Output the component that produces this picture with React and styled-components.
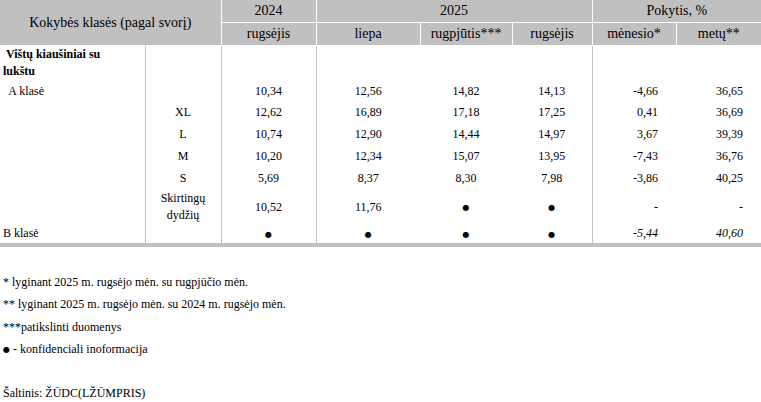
import React from "react";
import styled, { createGlobalStyle } from "styled-components";

const serif = `"Liberation Serif", "Times New Roman", serif`;

const GlobalStyle = createGlobalStyle`
  body {
    margin: 0;
    background: #fff;
    font-family: ${serif};
    color: #000;
  }
`;

const Page = styled.div`
  width: 761px;
  font-family: ${serif};
`;

const Table = styled.table`
  width: 761px;
  table-layout: fixed;
  border-collapse: collapse;
  font-family: ${serif};
  font-size: 12px;
`;

const HeadCell = styled.th`
  background: #c0c0c0;
  font-family: ${serif};
  font-weight: normal;
  font-size: 14px;
  height: 22px;
  padding: 0;
  text-align: center;
  vertical-align: middle;
  border: 1px solid #fff;
  border-top: none;
  &:first-child {
    border-left: none;
  }
  &:last-child {
    border-right: none;
  }
`;

const Row = styled.tr`
  height: ${p => p.$h}px;
  &:last-child td {
    border-bottom: 4px solid #c0c0c0;
  }
`;

const Cell = styled.td`
  padding: 0 ${p => (p.$align === "right" ? "18px" : p.$bold ? "10px" : "0")} 0 ${p => p.$indent || 0}px;
  text-align: ${p => p.$align || "center"};
  vertical-align: ${p => p.$valign || "middle"};
  border-left: ${p => (p.$line ? "1px solid #c0c0c0" : "none")};
  font-family: ${serif};
  font-size: 12px;
  font-style: ${p => (p.$italic ? "italic" : "normal")};
  font-weight: ${p => (p.$bold ? "bold" : "normal")};
  line-height: 17px;
`;

const Dot = styled.span`
  font-family: "DejaVu Sans", sans-serif;
  font-size: 8px;
  vertical-align: middle;
`;

const Notes = styled.div`
  padding: 24px 0 0 3px;
  font-family: ${serif};
  font-size: 12px;
  line-height: 22.5px;
`;

const Source = styled.p`
  margin: 20px 0 0;
`;

const D = () => <Dot>●</Dot>;

const sizes = [
  ["XL", "12,62", "16,89", "17,18", "17,25", "0,41", "36,69"],
  ["L", "10,74", "12,90", "14,44", "14,97", "3,67", "39,39"],
  ["M", "10,20", "12,34", "15,07", "13,95", "-7,43", "36,76"],
  ["S", "5,69", "8,37", "8,30", "7,98", "-3,86", "40,25"],
];

const DataCells = ({ cols, italic }) => (
  <>
    <Cell $line>{cols[0]}</Cell>
    <Cell $line>{cols[1]}</Cell>
    <Cell $line>{cols[2]}</Cell>
    <Cell>{cols[3]}</Cell>
    <Cell>{cols[4]}</Cell>
    <Cell $line $align="right" $italic={italic}>{cols[5]}</Cell>
    <Cell $align="right" $italic={italic}>{cols[6]}</Cell>
  </>
);

export default function App() {
  return (
    <Page>
      <GlobalStyle />
      <Table>
        <colgroup>
          <col style={{ width: 145 }} />
          <col style={{ width: 76 }} />
          <col style={{ width: 95 }} />
          <col style={{ width: 104 }} />
          <col style={{ width: 92 }} />
          <col style={{ width: 80 }} />
          <col style={{ width: 84 }} />
          <col style={{ width: 85 }} />
        </colgroup>
        <thead>
          <tr>
            <HeadCell colSpan={2} rowSpan={2}>Kokybės klasės (pagal svorį)</HeadCell>
            <HeadCell>2024</HeadCell>
            <HeadCell colSpan={3}>2025</HeadCell>
            <HeadCell colSpan={2}>Pokytis, %</HeadCell>
          </tr>
          <tr>
            <HeadCell>rugsėjis</HeadCell>
            <HeadCell>liepa</HeadCell>
            <HeadCell>rugpjūtis***</HeadCell>
            <HeadCell>rugsėjis</HeadCell>
            <HeadCell>mėnesio*</HeadCell>
            <HeadCell>metų**</HeadCell>
          </tr>
        </thead>
        <tbody>
          <Row $h={36}>
            <Cell $align="left" $valign="top" $bold $indent={3}>&nbsp;Vištų kiaušiniai su lukštu</Cell>
            <DataCells cols={["", "", "", "", "", "", ""]} />
          </Row>
          <Row $h={20}>
            <Cell $align="left" $indent={3}>&nbsp; A klasė</Cell>
            <DataCells cols={["", "10,34", "12,56", "14,82", "14,13", "-4,66", "36,65"]} />
          </Row>
          {sizes.map(s => (
            <Row $h={22} key={s[0]}>
              <Cell />
              <DataCells cols={s} />
            </Row>
          ))}
          <Row $h={35}>
            <Cell />
            <DataCells cols={["Skirtingų dydžių", "10,52", "11,76", <D />, <D />, "-", "-"]} />
          </Row>
          <Row $h={20}>
            <Cell $align="left" $indent={3}>B klasė</Cell>
            <DataCells italic cols={["", <D />, <D />, <D />, <D />, "-5,44", "40,60"]} />
          </Row>
        </tbody>
      </Table>
      <Notes>
        <div>* lyginant 2025 m. rugsėjo mėn. su rugpjūčio mėn.</div>
        <div>** lyginant 2025 m. rugsėjo mėn. su 2024 m. rugsėjo mėn.</div>
        <div>***patikslinti duomenys</div>
        <div><D /> - konfidenciali inoformacija</div>
        <Source>Šaltinis: ŽŪDC(LŽŪMPRIS)</Source>
      </Notes>
    </Page>
  );
}
